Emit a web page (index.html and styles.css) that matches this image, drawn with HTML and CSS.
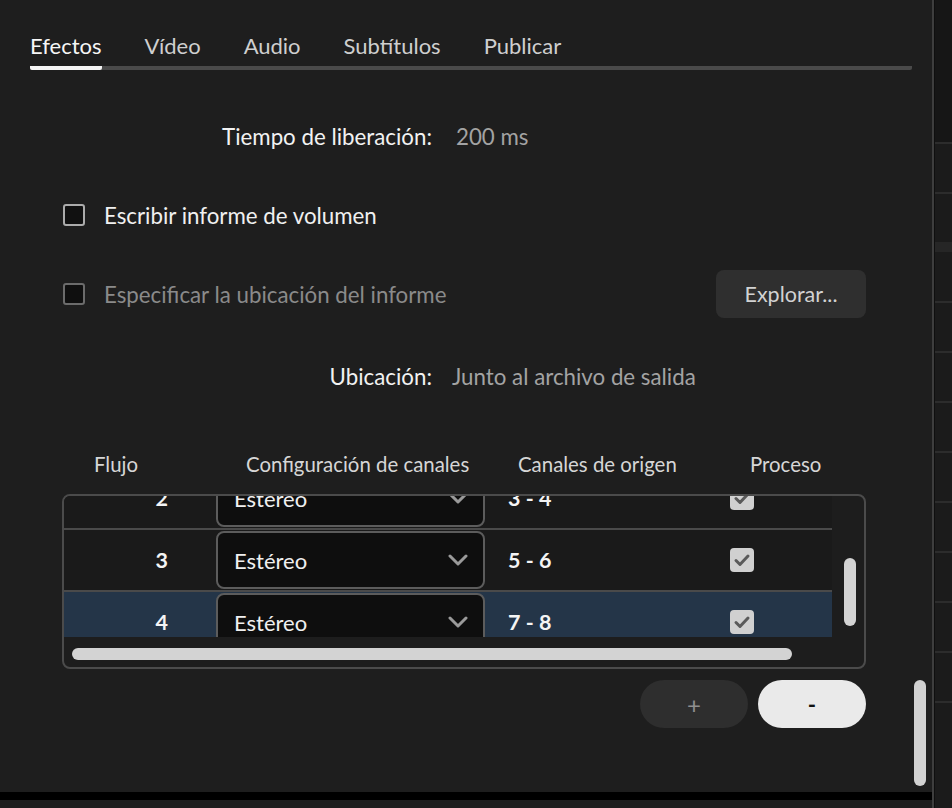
FILE: index.html
```html
<!DOCTYPE html>
<html lang="es">
<head>
<meta charset="utf-8">
<title>Exportar</title>
<link rel="stylesheet" href="styles.css">
</head>
<body>
<div class="app">
  <main class="main">
    <nav class="tabs">
      <span class="tab active">Efectos</span>
      <span class="tab">Vídeo</span>
      <span class="tab">Audio</span>
      <span class="tab">Subtítulos</span>
      <span class="tab">Publicar</span>
    </nav>

    <div class="field field-release">
      <span class="field-label">Tiempo de liberación:</span>
      <span class="field-value">200 ms</span>
    </div>

    <label class="check-row check-row-1">
      <span class="checkbox"></span>
      <span class="check-label">Escribir informe de volumen</span>
    </label>

    <div class="browse-row">
      <label class="check-row disabled">
        <span class="checkbox"></span>
        <span class="check-label">Especificar la ubicación del informe</span>
      </label>
      <button class="btn-browse">Explorar...</button>
    </div>

    <div class="field field-location">
      <span class="field-label">Ubicación:</span>
      <span class="field-value">Junto al archivo de salida</span>
    </div>

    <div class="table-head">
      <span>Flujo</span>
      <span>Configuración de canales</span>
      <span>Canales de origen</span>
      <span>Proceso</span>
    </div>

    <div class="table">
      <div class="table-body">
        <div class="viewport">
          <div class="rows">
            <div class="row">
              <span class="cell-num">2</span>
              <div class="select"><span>Estéreo</span><svg width="20" height="12" viewBox="0 0 20 12"><polyline points="2,2 10,10 18,2" fill="none" stroke="#9a9a9a" stroke-width="3" stroke-linecap="round" stroke-linejoin="round"/></svg></div>
              <span class="cell-src">3 - 4</span>
              <span class="cell-proc"><svg class="tick" width="24" height="24" viewBox="0 0 24 24"><rect width="24" height="24" rx="4" fill="#d0d0d0"/><polyline points="6,12.5 10,16.5 18,8" fill="none" stroke="#5a5a5a" stroke-width="3" stroke-linecap="round" stroke-linejoin="round"/></svg></span>
            </div>
            <div class="row">
              <span class="cell-num">3</span>
              <div class="select"><span>Estéreo</span><svg width="20" height="12" viewBox="0 0 20 12"><polyline points="2,2 10,10 18,2" fill="none" stroke="#9a9a9a" stroke-width="3" stroke-linecap="round" stroke-linejoin="round"/></svg></div>
              <span class="cell-src">5 - 6</span>
              <span class="cell-proc"><svg class="tick" width="24" height="24" viewBox="0 0 24 24"><rect width="24" height="24" rx="4" fill="#d0d0d0"/><polyline points="6,12.5 10,16.5 18,8" fill="none" stroke="#5a5a5a" stroke-width="3" stroke-linecap="round" stroke-linejoin="round"/></svg></span>
            </div>
            <div class="row selected">
              <span class="cell-num">4</span>
              <div class="select"><span>Estéreo</span><svg width="20" height="12" viewBox="0 0 20 12"><polyline points="2,2 10,10 18,2" fill="none" stroke="#9a9a9a" stroke-width="3" stroke-linecap="round" stroke-linejoin="round"/></svg></div>
              <span class="cell-src">7 - 8</span>
              <span class="cell-proc"><svg class="tick" width="24" height="24" viewBox="0 0 24 24"><rect width="24" height="24" rx="4" fill="#d0d0d0"/><polyline points="6,12.5 10,16.5 18,8" fill="none" stroke="#5a5a5a" stroke-width="3" stroke-linecap="round" stroke-linejoin="round"/></svg></span>
            </div>
          </div>
        </div>
        <div class="vscroll"><div class="vthumb"></div></div>
      </div>
      <div class="hscroll"><div class="hthumb"></div></div>
    </div>

    <div class="pm-row">
      <button class="pill pill-add">+</button>
      <button class="pill pill-remove">-</button>
    </div>

    <div class="main-scroll"></div>
    <div class="bottom-bar"></div>
    <div class="bottom-gap"></div>
  </main>
  <div class="divider"></div>
  <aside class="side">
    <div class="side-top"></div>
    <div class="side-cell"></div>
    <div class="side-cell"></div>
    <div class="side-cell band"></div>
    <div class="side-cell"></div>
    <div class="side-cell"></div>
    <div class="side-cell"></div>
    <div class="side-cell"></div>
    <div class="side-cell"></div>
    <div class="side-cell"></div>
    <div class="side-cell"></div>
    <div class="side-cell"></div>
    <div class="side-cell"></div>
  </aside>
</div>
</body>
</html>
```

FILE: styles.css
```css
* { box-sizing: border-box; }
html, body {
  margin: 0;
  padding: 0;
  background: #1e1e1e;
}
body {
  font-family: Lato, "Noto Sans", "Liberation Sans", sans-serif;
  font-size: 22.3px;
  color: #ececec;
}
.app {
  display: flex;
  width: 952px;
  height: 808px;
  overflow: hidden;
}
.main {
  position: relative;
  width: 932px;
  height: 808px;
  display: flex;
  flex-direction: column;
  background: #1e1e1e;
}

/* tabs */
.tabs {
  display: flex;
  margin: 0 20px 0 30px;
  height: 70px;
  align-items: flex-end;
  background: linear-gradient(#4a4a4a, #4a4a4a) left bottom / 100% 4px no-repeat;
  border-radius: 2px;
  font-size: 22px;
}
.tab {
  line-height: 26px;
  padding-bottom: 7px;
  border-bottom: 4px solid transparent;
  margin-right: 43px;
  color: #cfcfcf;
}
.tab.active {
  color: #f6f6f6;
  border-bottom-color: #f4f4f4;
  border-radius: 2px;
}

/* fields */
.field {
  display: flex;
  align-items: center;
  height: 40px;
}
.field-label {
  width: 432px;
  text-align: right;
  color: #f2f2f2;
}
.field-value {
  color: #a3a3a3;
}
.field-release { margin-top: 46px; }
.field-release .field-value { margin-left: 24px; }
.field-location { margin-top: 38px; }
.field-location .field-value { margin-left: 20px; }

.check-row {
  display: flex;
  align-items: center;
  height: 40px;
  padding-left: 63px;
}
.check-row-1 { margin-top: 39px; }
.checkbox {
  width: 22px;
  height: 22px;
  border: 2px solid #ababab;
  border-radius: 3px;
  background: #111111;
  margin-right: 19px;
}
.check-label { color: #f0f0f0; }
.check-row.disabled .checkbox { border-color: #6b6b6b; background: #0f0f0f; }
.check-row.disabled .check-label { color: #8a8a8a; }

.browse-row {
  display: flex;
  align-items: center;
  justify-content: space-between;
  height: 48px;
  margin-top: 35px;
  padding-right: 66px;
}
.btn-browse {
  width: 150px;
  height: 48px;
  border: 0;
  border-radius: 8px;
  background: #2f2f2f;
  color: #d2d2d2;
  font: inherit;
  font-size: 21.5px;
  padding: 0;
}

/* table */
.table-head {
  display: grid;
  grid-template-columns: 152px 272px 232px auto;
  height: 40px;
  align-items: center;
  margin-top: 48px;
  padding-left: 94px;
  color: #d6d6d6;
  font-size: 20.4px;
}
.table {
  margin: 10px 0 0 62px;
  width: 804px;
  height: 175px;
  border: 2px solid #4b4b4b;
  border-radius: 8px;
  background: #1d1d1d;
  overflow: hidden;
  display: flex;
  flex-direction: column;
}
.table-body {
  display: flex;
  height: 141px;
}
.viewport {
  width: 768px;
  height: 141px;
  overflow: hidden;
}
.rows { margin-top: -28px; }
.row {
  display: grid;
  grid-template-columns: 152px 269px 245px 1fr;
  align-items: center;
  height: 62px;
  border-bottom: 2px solid #4a4a4a;
  background: #1a1a1a;
  font-weight: 700;
  color: #f4f4f4;
  font-size: 21.5px;
}
.row.selected { background: #243548; }
.cell-num {
  text-align: right;
  padding-right: 48px;
}
.select {
  height: 58px;
  border: 2px solid #5c5c5c;
  border-radius: 8px;
  background: #0e0e0e;
  display: flex;
  align-items: center;
  justify-content: space-between;
  padding: 0 15px 0 16px;
  font-weight: 400;
  color: #f0f0f0;
  font-size: 22px;
}
.select svg { display: block; }
.cell-src { padding-left: 23px; }
.cell-proc { display: flex; }
.tick { display: block; }

.vscroll {
  flex: 1;
  padding: 62px 0 0 12px;
}
.vthumb {
  width: 12px;
  height: 68px;
  border-radius: 6px;
  background: #d3d3d3;
}
.hscroll {
  flex: 1;
  padding: 11px 0 0 8px;
}
.hthumb {
  width: 720px;
  height: 12px;
  border-radius: 6px;
  background: #d3d3d3;
}

/* plus / minus */
.pm-row {
  display: flex;
  justify-content: flex-end;
  gap: 10px;
  margin-top: 11px;
  padding-right: 66px;
}
.pill {
  width: 108px;
  height: 48px;
  border: 0;
  border-radius: 24px;
  font: inherit;
  padding: 0;
}
.pill-add { background: #2e2e2e; color: #8f8f8f; font-size: 24px; }
.pill-remove { background: #eaeaea; color: #111; font-weight: 700; }

.main-scroll {
  position: absolute;
  left: 914px;
  top: 680px;
  width: 12px;
  height: 106px;
  border-radius: 6px;
  background: #d2d2d2;
}
.bottom-bar {
  margin-top: auto;
  height: 8px;
  background: #000;
}
.bottom-gap { height: 8px; }

/* side */
.divider {
  width: 3px;
  background: #3e3e3e;
  border-right: 1px solid #0f0f0f;
}
.side {
  flex: 1;
  display: flex;
  flex-direction: column;
  background: #1b1b1b;
}
.side-top {
  height: 142px;
  background: #161616;
}
.side-cell {
  height: 50px;
  border-top: 2px solid #2c2c2c;
  flex: none;
}
.side-cell.band {
  height: 59px;
  border-top: 10px solid #262626;
}
```
